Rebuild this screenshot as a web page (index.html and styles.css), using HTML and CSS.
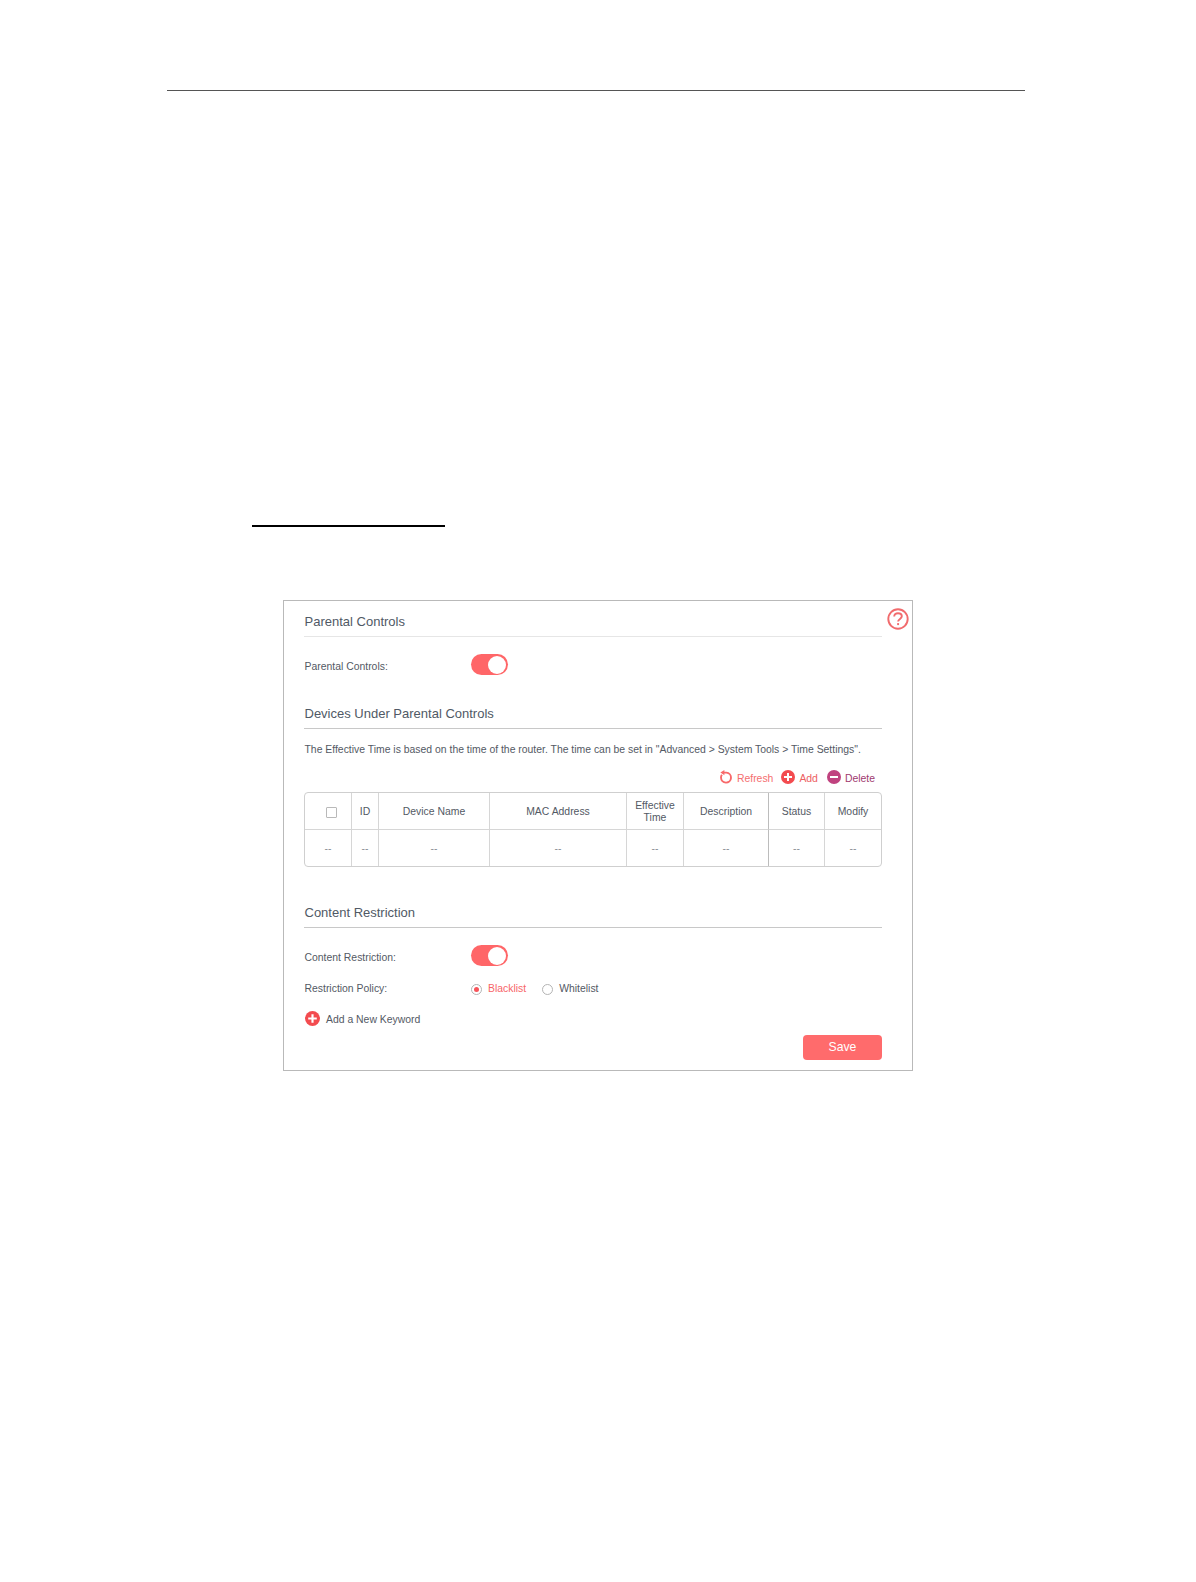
FILE: index.html
```html
<!DOCTYPE html>
<html lang="en">
<head>
<meta charset="utf-8">
<title>Parental Controls</title>
<link rel="stylesheet" href="styles.css">
</head>
<body>
<hr class="page-rule">
<hr class="title-rule">
<main class="panel">
  <svg class="help" viewBox="0 0 22 22"><circle cx="11" cy="11" r="9.7"/><path d="M7.2 8.6C7.2 6.4 8.8 5.2 11 5.2s3.8 1.2 3.8 3.1c0 2.5-3.7 2.7-3.7 5.3"/><path d="M11.1 15.1v2"/></svg>

  <h2 class="heading heading-first">Parental Controls</h2>
  <div class="row">
    <span class="label">Parental Controls:</span>
    <span class="toggle"></span>
  </div>

  <h2 class="heading heading-devices">Devices Under Parental Controls</h2>
  <p class="note">The Effective Time is based on the time of the router. The time can be set in "Advanced &gt; System Tools &gt; Time Settings".</p>
  <div class="toolbar">
    <span class="action refresh"><svg viewBox="0 0 14 14"><path d="M4.6 2.6H7.4A5 5 0 1 1 2 7.6C2 6.4 2.3 5.5 2.9 4.7" fill="none" stroke="#f8696a" stroke-width="1.9"/><path d="M1.4 2.5L5.4 0V5.2Z" fill="#f8696a"/></svg>Refresh</span>
    <span class="action add"><svg viewBox="0 0 14 14"><circle cx="7" cy="7" r="7" fill="#f34b4f"/><path d="M7 3v8M3 7h8" stroke="#fff" stroke-width="2"/></svg>Add</span>
    <span class="action delete"><svg viewBox="0 0 14 14"><circle cx="7" cy="7" r="7" fill="#c0427f"/><path d="M3 7h8" stroke="#fff" stroke-width="2"/></svg>Delete</span>
  </div>
  <div class="table">
    <div class="cell"><span class="checkbox"></span></div>
    <div class="cell">ID</div>
    <div class="cell">Device Name</div>
    <div class="cell">MAC Address</div>
    <div class="cell two-line">Effective<br>Time</div>
    <div class="cell dark">Description</div>
    <div class="cell">Status</div>
    <div class="cell">Modify</div>
    <div class="cell empty">--</div>
    <div class="cell empty">--</div>
    <div class="cell empty">--</div>
    <div class="cell empty">--</div>
    <div class="cell empty">--</div>
    <div class="cell empty dark">--</div>
    <div class="cell empty">--</div>
    <div class="cell empty">--</div>
  </div>

  <h2 class="heading heading-content">Content Restriction</h2>
  <div class="row">
    <span class="label">Content Restriction:</span>
    <span class="toggle"></span>
  </div>
  <div class="policy">
    <span class="label">Restriction Policy:</span>
    <span class="option selected"><i class="radio"></i><span class="option-text">Blacklist</span></span>
    <span class="option"><i class="radio"></i><span class="option-text">Whitelist</span></span>
  </div>
  <div class="keyword"><svg viewBox="0 0 14 14"><circle cx="7" cy="7" r="7" fill="#f34b4f"/><path d="M7 3v8M3 7h8" stroke="#fff" stroke-width="2"/></svg><span class="keyword-text">Add a New Keyword</span></div>
  <button class="save" type="button">Save</button>
</main>
</body>
</html>
```

FILE: styles.css
```css
* { box-sizing: border-box; }

body {
  margin: 0;
  height: 1582px;
  background: #fff;
  color: #535964;
  font: 10.42px "Liberation Sans", Arial, sans-serif;
  overflow: hidden;
  display: flow-root;
}

.page-rule {
  width: 858px;
  height: 1px;
  margin: 90px 0 0 167px;
  border: 0;
  background: #555;
}

.title-rule {
  width: 193px;
  height: 2px;
  margin: 434px 0 0 252px;
  border: 0;
  background: #000;
}

.panel {
  position: relative;
  width: 630px;
  height: 471px;
  margin: 73px 0 0 283px;
  padding: 0 30px 0 20px;
  border: 1px solid #b9b9b9;
}

.help {
  position: absolute;
  top: 7px;
  right: 3px;
  width: 22px;
  height: 22px;
  fill: none;
  stroke: #f16b6d;
  stroke-width: 1.9;
}

.heading {
  margin: 0;
  padding-left: 0.5px;
  padding-bottom: 2px;
  border-bottom: 1px solid #c8c8c8;
  font-size: 13px;
  font-weight: 400;
  line-height: 25px;
  color: #505965;
}

.heading-first { padding-top: 8px; border-color: #e6e6e6; }
.heading-devices { padding-top: 9px; }
.heading-content { padding-top: 33px; }

.row {
  display: flex;
  align-items: center;
  height: 55px;
}

.label {
  width: 167px;
  padding-left: 0.5px;
}

.row .label { padding-top: 4px; }
.policy .label { padding-bottom: 2px; }

.toggle {
  display: flex;
  justify-content: flex-end;
  width: 37px;
  height: 21px;
  padding: 1.5px 2.5px;
  border-radius: 11px;
  background: #ff6668;
}

.toggle::after {
  content: "";
  width: 18px;
  height: 18px;
  border-radius: 50%;
  background: #fff;
}

.note {
  margin: 0;
  padding-left: 0.5px;
  line-height: 41px;
  white-space: nowrap;
}

.toolbar {
  display: flex;
  justify-content: flex-end;
  height: 22px;
  padding-right: 7px;
  line-height: 17px;
}

.action {
  display: flex;
  gap: 4px;
}

.action svg { width: 14px; height: 14px; }
.refresh { color: #f56e6f; margin-right: 8px; }
.add { color: #ed6062; margin-right: 9px; }
.delete { color: #a03a70; }

.table {
  display: grid;
  grid-template-columns: 47px 27px 111px 137px 57px 85px 56px 56px;
  grid-template-rows: 37px 36px;
  border: 1px solid #cfcfcf;
  border-radius: 4px;
}

.cell {
  display: flex;
  align-items: center;
  justify-content: center;
  padding-top: 2px;
  border-right: 1px solid #d6d6d6;
  line-height: 12px;
  text-align: center;
}

.cell:nth-child(-n+8) { border-bottom: 1px solid #d6d6d6; }
.cell:nth-child(8n) { border-right: 0; }
.cell.dark { border-right-color: #bcbcbc; }
.two-line { padding-top: 1px; }
.empty { color: #8b9097; }

.checkbox {
  width: 11px;
  height: 11px;
  margin: 0 0 0 7px;
  border: 1px solid #b9b9b9;
  border-radius: 1px;
}

.policy {
  display: flex;
  align-items: center;
  height: 12px;
}

.option {
  display: flex;
  align-items: center;
  gap: 6px;
  margin-right: 16px;
}

.option-text { padding-bottom: 2px; }

.option.selected { color: #f76568; }

.radio {
  display: flex;
  width: 11px;
  height: 11px;
  padding: 2px;
  border: 1px solid #b4b4b4;
  border-radius: 50%;
}

.selected .radio::after {
  content: "";
  flex: 1;
  border-radius: 50%;
  background: #f7545a;
}

.keyword {
  display: flex;
  align-items: center;
  gap: 6.5px;
  height: 17px;
  margin-top: 15px;
  padding-left: 0.5px;
}

.keyword svg { width: 15px; height: 15px; }
.keyword-text { padding-top: 2px; }

.save {
  display: block;
  width: 79px;
  height: 25px;
  margin: 8px 0 0 auto;
  padding: 0;
  border: 0;
  border-radius: 4px;
  background: #ff6b6c;
  color: #fff;
  font: 12.2px/25px "Liberation Sans", Arial, sans-serif;
}
```
